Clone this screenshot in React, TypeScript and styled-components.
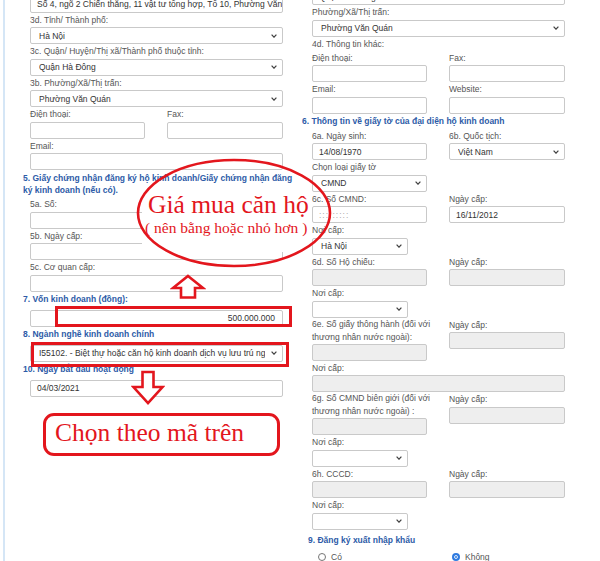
import React from 'react';
import styled, { createGlobalStyle } from 'styled-components';

const RED = '#e3161d';
const BLUE = '#2d5ba7';

const GlobalStyle = createGlobalStyle`
  html, body { margin: 0; padding: 0; background: #fff; }
  body { font-family: 'Liberation Sans', Arial, sans-serif; }
`;

const Page = styled.div`
  position: relative;
  display: flex;
  align-items: flex-start;
  width: 600px;
  height: 561px;
  overflow: hidden;
  font-size: 8.5px;
  color: #555;
`;

const LeftPanel = styled.section`
  box-sizing: border-box;
  width: 297px;
  height: 570px;
  margin: -4.5px 0 0 3px;
  padding-left: 18px;
  border-left: 2px solid #d5e6f6;
`;

const RightPanel = styled.section`
  box-sizing: border-box;
  width: 300px;
  margin-top: -12px;
  padding-left: 2px;
`;

const Group = styled.div<{ $indent: number }>`
  width: 253px;
  margin-left: ${({ $indent }) => $indent}px;
`;

const Heading = styled.div<{ $mt?: number; $mb?: number; $ml?: number }>`
  margin: ${({ $mt = 1 }) => $mt}px 0 ${({ $mb = 5 }) => $mb}px ${({ $ml = 0 }) => $ml}px;
  font-weight: bold;
  line-height: 12px;
  color: ${BLUE};
  white-space: nowrap;
`;

const Label = styled.div<{ $lh?: number }>`
  line-height: ${({ $lh = 14.5 }) => $lh}px;
  white-space: nowrap;
`;

const Box = styled.div<{ $w?: number; $disabled?: boolean; $right?: boolean }>`
  box-sizing: border-box;
  display: flex;
  align-items: center;
  justify-content: ${({ $right }) => ($right ? 'flex-end' : 'flex-start')};
  width: ${({ $w }) => ($w ? `${$w}px` : '100%')};
  height: 17px;
  padding: 0 7px 0 6px;
  border: 1px solid #c9c9c9;
  border-radius: 2px;
  background: ${({ $disabled }) => ($disabled ? '#eeeeee' : '#fff')};
  color: #333;
  white-space: nowrap;
  overflow: hidden;
`;

const SelectBox = styled(Box)`
  justify-content: space-between;
  gap: 6px;
  padding: 0 5px 0 8px;
`;

const SelectText = styled.span`
  flex: 1;
  overflow: hidden;
`;

const Masked = styled.span`
  color: #aaa;
  letter-spacing: 1px;
`;

const Row = styled.div`
  display: grid;
  grid-template-columns: 115px 116px;
  column-gap: 22px;
  align-items: start;
`;

const RadioRow = styled.div`
  display: grid;
  grid-template-columns: 134px auto;
  margin: 5px 0 0 6px;
  line-height: 12px;
`;

const RadioOption = styled.label`
  display: flex;
  align-items: center;
  gap: 5px;
  color: #555;
`;

const RadioDot = styled.span<{ $checked?: boolean }>`
  box-sizing: border-box;
  width: 8px;
  height: 8px;
  border-radius: 50%;
  border: ${({ $checked }) => ($checked ? '2px solid #2f7be0' : '1px solid #767676')};
  background: ${({ $checked }) => ($checked ? '#2f7be0' : '#fff')};
  box-shadow: ${({ $checked }) => ($checked ? 'inset 0 0 0 1px #fff' : 'none')};
`;

/* annotations drawn over the form */
const Mark = styled.div<{ $x: number; $y: number; $w: number; $h: number }>`
  position: absolute;
  left: ${({ $x }) => $x}px;
  top: ${({ $y }) => $y}px;
  width: ${({ $w }) => $w}px;
  height: ${({ $h }) => $h}px;
  pointer-events: none;
`;

const Highlight = styled(Mark)`
  box-sizing: border-box;
  border: 3px solid ${RED};
`;

const NoteCard = styled(Mark)`
  background: #fff;
  color: ${RED};
  font-family: 'Liberation Serif', 'Times New Roman', serif;
`;

const NoteLine = styled.div<{ $size: number; $indent: number; $mt?: number }>`
  margin: ${({ $mt = 0 }) => $mt}px 0 0 ${({ $indent }) => $indent}px;
  font-size: ${({ $size }) => $size}px;
  line-height: 1;
  white-space: nowrap;
`;

const Callout = styled(Mark)`
  box-sizing: border-box;
  padding: 3.5px 0 0 9px;
  border: 3px solid ${RED};
  border-radius: 11px;
  color: ${RED};
  font-family: 'Liberation Serif', 'Times New Roman', serif;
  font-size: 25.5px;
  line-height: 1;
  white-space: nowrap;
`;

const Chevron = () => (
  <svg width="6" height="4" viewBox="0 0 6 4">
    <polyline points="0.6,0.6 3,3.2 5.4,0.6" fill="none" stroke="#444" strokeWidth="1.2" />
  </svg>
);

const Select = ({ value = '', w }: { value?: string; w?: number }) => (
  <SelectBox $w={w}>
    <SelectText>{value}</SelectText>
    <Chevron />
  </SelectBox>
);

const Field = ({ label, children, lh }: { label: React.ReactNode; children: React.ReactNode; lh?: number }) => (
  <div>
    <Label $lh={lh}>{label}</Label>
    {children}
  </div>
);

export default function App() {
  return (
    <>
      <GlobalStyle />
      <Page>
        <LeftPanel>
          <Group $indent={7}>
            <Box>Số 4, ngõ 2 Chiến thắng, 11 vật tư tổng hợp, Tổ 10, Phường Văn Quán</Box>
            <Field label="3d. Tỉnh/ Thành phố:">
              <Select value="Hà Nội" />
            </Field>
            <Field label="3c. Quận/ Huyện/Thị xã/Thành phố thuộc tỉnh:">
              <Select value="Quận Hà Đông" />
            </Field>
            <Field label="3b. Phường/Xã/Thị trấn:">
              <Select value="Phường Văn Quán" />
            </Field>
            <Row>
              <Field label="Điện thoại:"><Box /></Field>
              <Field label="Fax:"><Box /></Field>
            </Row>
            <Field label="Email:"><Box /></Field>
          </Group>
          <Heading $mt={2} $mb={1}>
            5. Giấy chứng nhận đăng ký hộ kinh doanh/Giấy chứng nhận đăng
            <br />
            ký kinh doanh (nếu có).
          </Heading>
          <Group $indent={7}>
            <Field label="5a. Số:"><Box /></Field>
            <Field label="5b. Ngày cấp:"><Box /></Field>
            <Field label="5c. Cơ quan cấp:"><Box /></Field>
          </Group>
          <Heading>7. Vốn kinh doanh (đồng):</Heading>
          <Group $indent={7}>
            <Box $right>500.000.000</Box>
          </Group>
          <Heading>8. Ngành nghề kinh doanh chính</Heading>
          <Group $indent={7}>
            <Select value="I55102. - Biệt thự hoặc căn hộ kinh doanh dịch vụ lưu trú ngắn ngày" />
          </Group>
          <Heading>10. Ngày bắt đầu hoạt động</Heading>
          <Group $indent={7}>
            <Box>04/03/2021</Box>
          </Group>
        </LeftPanel>

        <RightPanel>
          <Group $indent={10}>
            <Box>Quận Hà Đông</Box>
            <Field label="Phường/Xã/Thị trấn:">
              <Select value="Phường Văn Quán" />
            </Field>
            <Label $lh={14}>4d. Thông tin khác:</Label>
            <Row>
              <Field label="Điện thoại:"><Box /></Field>
              <Field label="Fax:"><Box /></Field>
            </Row>
            <Row>
              <Field label="Email:"><Box /></Field>
              <Field label="Website:"><Box /></Field>
            </Row>
          </Group>
          <Heading $mb={2}>6. Thông tin về giấy tờ của đại diện hộ kinh doanh</Heading>
          <Group $indent={10}>
            <Row>
              <Field label="6a. Ngày sinh:"><Box>14/08/1970</Box></Field>
              <Field label="6b. Quốc tịch:"><Select value="Việt Nam" /></Field>
            </Row>
            <Field label="Chọn loại giấy tờ">
              <Select value="CMND" w={115} />
            </Field>
            <Row>
              <Field label="6c. Số CMND:"><Box><Masked>:::::::::</Masked></Box></Field>
              <Field label="Ngày cấp:"><Box>16/11/2012</Box></Field>
            </Row>
            <Field label="Nơi cấp:">
              <Select value="Hà Nội" w={96} />
            </Field>
            <Row>
              <Field label="6d. Số Hộ chiếu:"><Box $disabled /></Field>
              <Field label="Ngày cấp:"><Box $disabled /></Field>
            </Row>
            <Field label="Nơi cấp:">
              <Select w={96} />
            </Field>
            <Row>
              <Field lh={13} label={<>6e. Số giấy thông hành (đối với<br />thương nhân nước ngoài):</>}>
                <Box $disabled />
              </Field>
              <Field label="Ngày cấp:"><Box $disabled /></Field>
            </Row>
            <Field label="Nơi cấp:"><Box $disabled /></Field>
            <Row>
              <Field lh={13} label={<>6g. Số CMND biên giới (đối với<br />thương nhân nước ngoài) :</>}>
                <Box $disabled />
              </Field>
              <Field label="Ngày cấp:"><Box $disabled /></Field>
            </Row>
            <Field label="Nơi cấp:">
              <Select w={96} />
            </Field>
            <Row>
              <Field label="6h. CCCD:"><Box $disabled /></Field>
              <Field label="Ngày cấp:"><Box $disabled /></Field>
            </Row>
            <Field label="Nơi cấp:">
              <Select w={96} />
            </Field>
          </Group>
          <Heading $mt={4} $mb={0} $ml={6}>9. Đăng ký xuất nhập khẩu</Heading>
          <Group $indent={10}>
            <RadioRow>
              <RadioOption><RadioDot />Có</RadioOption>
              <RadioOption><RadioDot $checked />Không</RadioOption>
            </RadioRow>
          </Group>
        </RightPanel>

        <NoteCard $x={142} $y={192} $w={170} $h={60}>
          <NoteLine $size={25.5} $indent={6}>Giá mua căn hộ</NoteLine>
          <NoteLine $size={15.5} $indent={3} $mt={2.5}>( nên bằng hoặc nhỏ hơn )</NoteLine>
        </NoteCard>
        <Mark $x={135} $y={157} $w={198} $h={112}>
          <svg width="198" height="112" viewBox="0 0 198 112">
            <ellipse cx="99" cy="56" rx="96" ry="53" fill="none" stroke={RED} strokeWidth="2.6" />
          </svg>
        </Mark>
        <Mark $x={170} $y={273} $w={36} $h={27}>
          <svg width="36" height="27" viewBox="0 0 36 27">
            <polygon points="18,3 33,15 25,15 25,24.5 11,24.5 11,15 3,15" fill="#fff" stroke={RED} strokeWidth="2.6" strokeLinejoin="miter" />
          </svg>
        </Mark>
        <Highlight $x={55} $y={306} $w={237} $h={21} />
        <Highlight $x={31} $y={342} $w={258} $h={25} />
        <Mark $x={131} $y={368} $w={34} $h={38}>
          <svg width="34" height="38" viewBox="0 0 34 38">
            <polygon points="11.5,4 22.5,4 22.5,19 31.5,19 17,35 2.5,19 11.5,19" fill="#fff" stroke={RED} strokeWidth="2.6" />
          </svg>
        </Mark>
        <Callout $x={43} $y={413} $w={237} $h={43}>Chọn theo mã trên</Callout>
      </Page>
    </>
  );
}
